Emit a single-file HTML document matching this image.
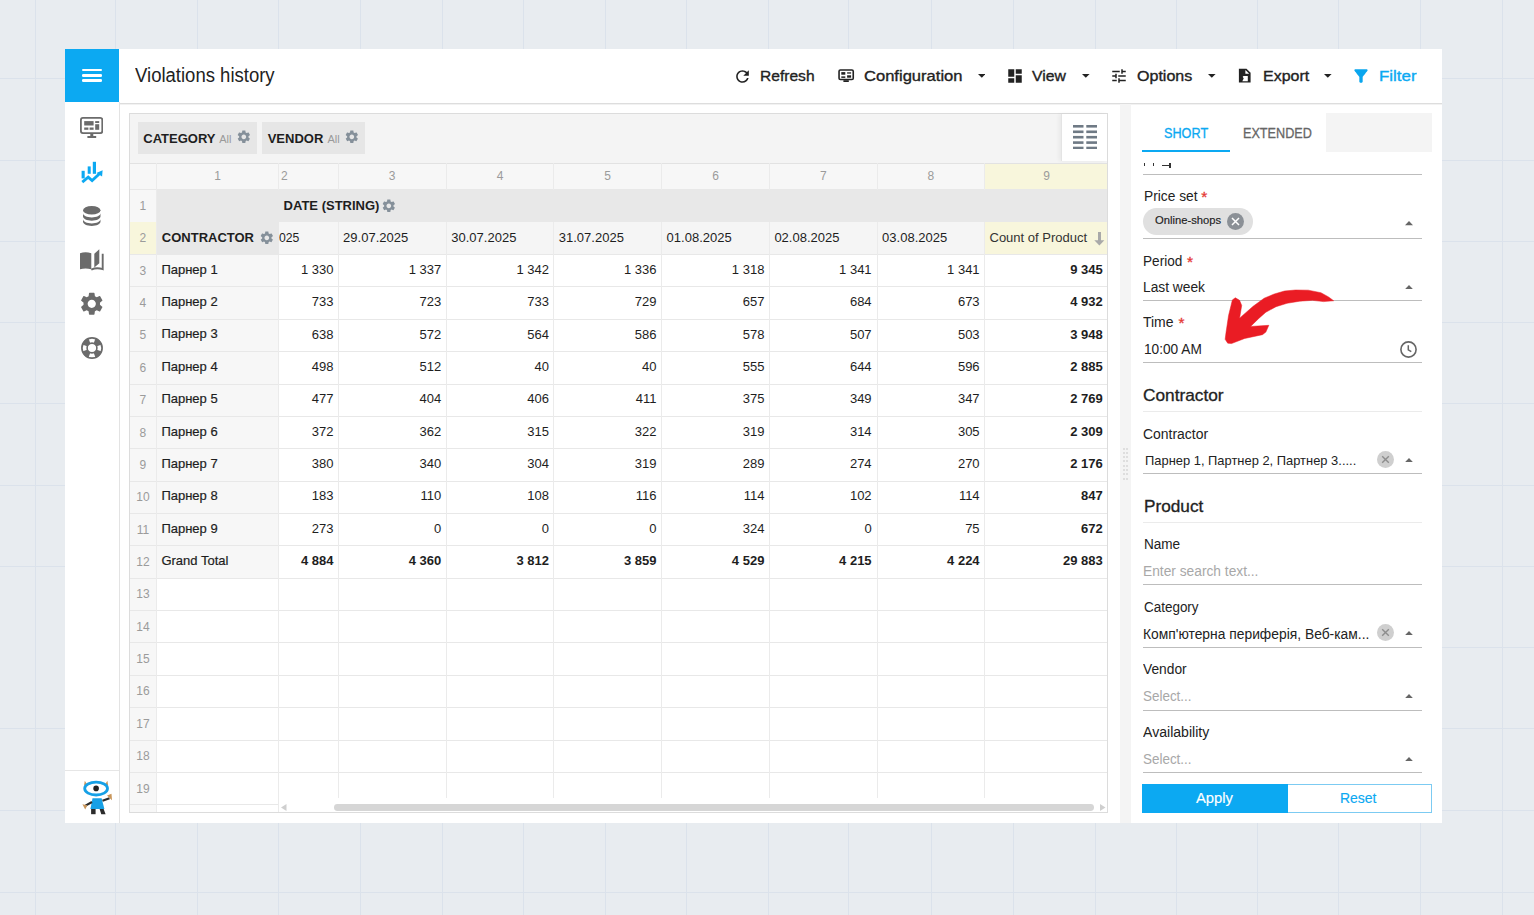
<!DOCTYPE html>
<html><head><meta charset="utf-8"><title>Violations history</title>
<style>
html,body{margin:0;padding:0;}
body{width:1534px;height:915px;position:relative;overflow:hidden;background:#e8ecf0;font-family:"Liberation Sans", sans-serif;}
.r{position:absolute;}
.t{position:absolute;white-space:nowrap;font-family:"Liberation Sans", sans-serif;}
</style></head><body>
<div class="r" style="left:35.00px;top:0.00px;width:1.00px;height:915.00px;background:#dbe2eb;"></div>
<div class="r" style="left:115.00px;top:0.00px;width:1.00px;height:915.00px;background:#dbe2eb;"></div>
<div class="r" style="left:197.00px;top:0.00px;width:1.00px;height:915.00px;background:#dbe2eb;"></div>
<div class="r" style="left:278.00px;top:0.00px;width:1.00px;height:915.00px;background:#dbe2eb;"></div>
<div class="r" style="left:360.00px;top:0.00px;width:1.00px;height:915.00px;background:#dbe2eb;"></div>
<div class="r" style="left:442.00px;top:0.00px;width:1.00px;height:915.00px;background:#dbe2eb;"></div>
<div class="r" style="left:523.00px;top:0.00px;width:1.00px;height:915.00px;background:#dbe2eb;"></div>
<div class="r" style="left:605.00px;top:0.00px;width:1.00px;height:915.00px;background:#dbe2eb;"></div>
<div class="r" style="left:686.00px;top:0.00px;width:1.00px;height:915.00px;background:#dbe2eb;"></div>
<div class="r" style="left:768.00px;top:0.00px;width:1.00px;height:915.00px;background:#dbe2eb;"></div>
<div class="r" style="left:848.00px;top:0.00px;width:1.00px;height:915.00px;background:#dbe2eb;"></div>
<div class="r" style="left:931.00px;top:0.00px;width:1.00px;height:915.00px;background:#dbe2eb;"></div>
<div class="r" style="left:1013.00px;top:0.00px;width:1.00px;height:915.00px;background:#dbe2eb;"></div>
<div class="r" style="left:1095.00px;top:0.00px;width:1.00px;height:915.00px;background:#dbe2eb;"></div>
<div class="r" style="left:1176.00px;top:0.00px;width:1.00px;height:915.00px;background:#dbe2eb;"></div>
<div class="r" style="left:1257.00px;top:0.00px;width:1.00px;height:915.00px;background:#dbe2eb;"></div>
<div class="r" style="left:1338.00px;top:0.00px;width:1.00px;height:915.00px;background:#dbe2eb;"></div>
<div class="r" style="left:1420.00px;top:0.00px;width:1.00px;height:915.00px;background:#dbe2eb;"></div>
<div class="r" style="left:1502.00px;top:0.00px;width:1.00px;height:915.00px;background:#dbe2eb;"></div>
<div class="r" style="left:0.00px;top:78.00px;width:1534.00px;height:1.00px;background:#dbe2eb;"></div>
<div class="r" style="left:0.00px;top:160.00px;width:1534.00px;height:1.00px;background:#dbe2eb;"></div>
<div class="r" style="left:0.00px;top:241.00px;width:1534.00px;height:1.00px;background:#dbe2eb;"></div>
<div class="r" style="left:0.00px;top:322.00px;width:1534.00px;height:1.00px;background:#dbe2eb;"></div>
<div class="r" style="left:0.00px;top:403.00px;width:1534.00px;height:1.00px;background:#dbe2eb;"></div>
<div class="r" style="left:0.00px;top:485.00px;width:1534.00px;height:1.00px;background:#dbe2eb;"></div>
<div class="r" style="left:0.00px;top:566.00px;width:1534.00px;height:1.00px;background:#dbe2eb;"></div>
<div class="r" style="left:0.00px;top:728.00px;width:1534.00px;height:1.00px;background:#dbe2eb;"></div>
<div class="r" style="left:0.00px;top:810.00px;width:1534.00px;height:1.00px;background:#dbe2eb;"></div>
<div class="r" style="left:0.00px;top:892.00px;width:1534.00px;height:1.00px;background:#dbe2eb;"></div>
<div class="r" style="left:1442.00px;top:647.00px;width:92.00px;height:1.00px;background:#dbe2eb;"></div>
<div class="r" style="left:65.00px;top:49.00px;width:1377.00px;height:774.00px;background:#ffffff;"></div>
<div class="r" style="left:65.00px;top:49.00px;width:53.50px;height:53.30px;background:#0ca9f2;"></div>
<div class="r" style="left:81.50px;top:68.70px;width:20.20px;height:2.60px;background:#ffffff;border-radius:1.3px"></div>
<div class="r" style="left:81.50px;top:74.00px;width:20.20px;height:2.60px;background:#ffffff;border-radius:1.3px"></div>
<div class="r" style="left:81.50px;top:79.40px;width:20.20px;height:2.60px;background:#ffffff;border-radius:1.3px"></div>
<div class="r" style="left:118.50px;top:103.00px;width:1323.50px;height:1.00px;background:#dddddd;"></div>
<div class="r" style="left:118.50px;top:104.00px;width:1323.50px;height:1.00px;background:#f2f2f2;"></div>
<div class="r" style="left:118.50px;top:102.00px;width:1.20px;height:721.00px;background:#e3e3e3;"></div>
<div class="r" style="left:65.00px;top:770.00px;width:53.50px;height:1.00px;background:#e6e6e6;"></div>
<div class="t" style="left:135.00px;top:64.67px;font-size:20px;line-height:20px;color:#222;font-weight:normal;transform:scaleX(0.9257);transform-origin:0 0;">Violations history</div>
<div class="t" style="left:760.40px;top:68.03px;font-size:15.2px;line-height:15.2px;color:#222222;font-weight:normal;transform:scaleX(1.0263);transform-origin:0 0;-webkit-text-stroke:0.35px currentColor;">Refresh</div>
<div class="t" style="left:863.60px;top:68.03px;font-size:15.2px;line-height:15.2px;color:#222222;font-weight:normal;transform:scaleX(1.0902);transform-origin:0 0;-webkit-text-stroke:0.35px currentColor;">Configuration</div>
<div class="t" style="left:1032.10px;top:68.03px;font-size:15.2px;line-height:15.2px;color:#222222;font-weight:normal;transform:scaleX(1.0386);transform-origin:0 0;-webkit-text-stroke:0.35px currentColor;">View</div>
<div class="t" style="left:1136.80px;top:68.03px;font-size:15.2px;line-height:15.2px;color:#222222;font-weight:normal;transform:scaleX(1.0564);transform-origin:0 0;-webkit-text-stroke:0.35px currentColor;">Options</div>
<div class="t" style="left:1262.60px;top:68.03px;font-size:15.2px;line-height:15.2px;color:#222222;font-weight:normal;transform:scaleX(1.0517);transform-origin:0 0;-webkit-text-stroke:0.35px currentColor;">Export</div>
<div class="t" style="left:1378.50px;top:68.03px;font-size:15.2px;line-height:15.2px;color:#0ca9f2;font-weight:normal;transform:scaleX(1.1143);transform-origin:0 0;-webkit-text-stroke:0.35px currentColor;">Filter</div>
<svg class="r" style="left:732.80px;top:66.50px;" width="19.00" height="19.00" viewBox="0 0 24 24"><path fill="#222222" d="M17.65 6.35C16.2 4.9 14.21 4 12 4c-4.42 0-7.99 3.58-7.99 8s3.57 8 7.99 8c3.73 0 6.84-2.55 7.73-6h-2.08c-.82 2.33-3.04 4-5.65 4-3.31 0-6-2.69-6-6s2.69-6 6-6c1.66 0 3.14.69 4.22 1.78L13 11h7V4l-2.35 2.35z"/></svg>
<svg class="r" style="left:830.00px;top:62.00px;" width="40.00" height="28.00" viewBox="0 0 40 28"><rect x="9.05" y="7.95" width="14.2" height="9.6" rx="1.3" fill="none" stroke="#222222" stroke-width="1.6"/><rect x="11.3" y="10.1" width="4" height="2.6" fill="#222222"/><rect x="17.1" y="10.1" width="4" height="1.7" fill="#555"/><rect x="11.3" y="14.4" width="4" height="1.5" fill="#222222"/><rect x="17.1" y="13.3" width="4" height="2.4" fill="#222222"/><rect x="13.4" y="18.2" width="5.4" height="1.8" fill="#222222"/></svg>
<svg class="r" style="left:977.70px;top:74.00px;" width="7.60" height="3.80" viewBox="0 0 7.6 3.8"><path fill="#222222" d="M0 0H7.6L3.8 3.8z"/></svg>
<svg class="r" style="left:1082.10px;top:74.00px;" width="7.60" height="3.80" viewBox="0 0 7.6 3.8"><path fill="#222222" d="M0 0H7.6L3.8 3.8z"/></svg>
<svg class="r" style="left:1208.00px;top:74.00px;" width="7.60" height="3.80" viewBox="0 0 7.6 3.8"><path fill="#222222" d="M0 0H7.6L3.8 3.8z"/></svg>
<svg class="r" style="left:1324.00px;top:74.00px;" width="7.60" height="3.80" viewBox="0 0 7.6 3.8"><path fill="#222222" d="M0 0H7.6L3.8 3.8z"/></svg>
<svg class="r" style="left:1005.90px;top:67.20px;" width="18.00" height="18.00" viewBox="0 0 24 24"><path fill="#222222" d="M3 13h8V3H3v10zm0 8h8v-6H3v6zm10 0h8V11h-8v10zm0-18v6h8V3h-8z" transform="translate(12 12) scale(1.0 1.0) translate(-12 -12)"/></svg>
<svg class="r" style="left:1110.05px;top:66.95px;" width="18.00" height="18.00" viewBox="0 0 24 24"><path fill="#222222" d="M3 17v2h6v-2H3zM3 5v2h10V5H3zm10 16v-2h8v-2h-8v-2h-2v6h2zM7 9v2H3v2h4v2h2V9H7zm14 4v-2H11v2h10zm-6-4h2V7h4V5h-4V3h-2v6z"/></svg>
<svg class="r" style="left:1234.00px;top:64.00px;" width="22.00" height="22.00" viewBox="0 0 22 22"><path fill="#222222" d="M4.9 4.7H12.5L16.6 8.7V18.6H4.9z"/><path fill="#fff" d="M11.4 6.1V9.7H15.2z"/><path fill="#fff" d="M9.5 11.9H13.8V17.2H8.3L9.7 14.6 8.7 12.7z"/></svg>
<svg class="r" style="left:1351.30px;top:65.70px;" width="20.00" height="20.00" viewBox="0 0 24 24"><path fill="#0aa6ee" d="M4.25 5.61C6.27 8.2 10 13 10 13v6c0 .55.45 1 1 1h2c.55 0 1-.45 1-1v-6s3.72-4.8 5.74-7.39c.51-.66.04-1.61-.79-1.61H5.04c-.83 0-1.3.95-.79 1.61z"/></svg>
<svg class="r" style="left:79.80px;top:116.60px;" width="23.20" height="21.00" viewBox="0 0 23.2 21"><rect x="0.9" y="0.9" width="21.4" height="15.2" rx="2" fill="none" stroke="#6b6b6b" stroke-width="1.8"/><rect x="4.2" y="4.1" width="9.4" height="4.4" fill="#6b6b6b"/><rect x="4.2" y="10.5" width="4.2" height="2.3" fill="#6b6b6b"/><rect x="9.6" y="10.5" width="4" height="2.3" fill="#6b6b6b"/><rect x="15.2" y="4.1" width="4" height="1.9" fill="#6b6b6b"/><rect x="15.2" y="7.2" width="4" height="5.6" fill="#6b6b6b"/><rect x="10.3" y="16.9" width="3" height="2.4" fill="#6b6b6b"/><rect x="7.4" y="19" width="8.8" height="2" fill="#6b6b6b"/></svg>
<svg class="r" style="left:80.00px;top:160.00px;" width="24.00" height="25.00" viewBox="0 0 24 25"><rect x="1.6" y="10.8" width="3.1" height="7.6" fill="#0ca9f2"/><rect x="7.7" y="6.4" width="3" height="7.4" fill="#0ca9f2"/><rect x="12.8" y="1.8" width="3.2" height="12" fill="#0ca9f2"/><polyline points="2.3,22.1 8.2,17.2 12.1,20.6 20,13.2" fill="none" stroke="#0ca9f2" stroke-width="2.8"/><path fill="#0ca9f2" d="M22.6 10.3L22.1 16.6 16.4 12.9z"/></svg>
<svg class="r" style="left:81.80px;top:204.80px;" width="19.50" height="21.20" viewBox="0 0 19.5 21.2"><path fill="#6b6b6b" d="M1 14.2v2.6c0 2.3 3.9 4.2 8.75 4.2s8.75-1.9 8.75-4.2v-2.6c0 2.3-3.9 4.2-8.75 4.2S1 16.5 1 14.2z"/><path fill="#6b6b6b" d="M1 8.3v3.2c0 2.3 3.9 4.2 8.75 4.2s8.75-1.9 8.75-4.2V8.3c0 2.3-3.9 4.2-8.75 4.2S1 10.6 1 8.3z"/><ellipse cx="9.75" cy="5.2" rx="8.75" ry="4.3" fill="#6b6b6b"/></svg>
<svg class="r" style="left:79.80px;top:249.30px;" width="23.80" height="21.60" viewBox="0 0 23.8 21.6"><path fill="#6b6b6b" d="M0 4.2C3.5 3 7.5 3 11.3 4.2V20.3C7.5 19.1 3.5 19.1 0 20.3z"/><path fill="#6b6b6b" d="M14.3 4.8L19.3 0.3V14.2L14.3 18.4z"/><path fill="none" stroke="#6b6b6b" stroke-width="1.9" d="M22.7 4.8V20.2C19 19 15 19 11.3 20.6"/></svg>
<svg class="r" style="left:77.55px;top:289.95px;" width="27.50" height="27.50" viewBox="0 0 24 24"><path fill="#6b6b6b" d="M19.14,12.94c0.04-0.3,0.06-0.61,0.06-0.94c0-0.32-0.02-0.64-0.07-0.94l2.03-1.58c0.18-0.14,0.23-0.41,0.12-0.61l-1.92-3.32c-0.12-0.22-0.37-0.29-0.59-0.22l-2.39,0.96c-0.5-0.38-1.03-0.7-1.62-0.94L14.4,2.81c-0.04-0.24-0.24-0.41-0.48-0.41h-3.84c-0.24,0-0.43,0.17-0.47,0.41L9.25,5.35C8.66,5.59,8.12,5.92,7.63,6.29L5.24,5.33c-0.22-0.08-0.47,0-0.59,0.22L2.74,8.87C2.62,9.08,2.66,9.34,2.86,9.48l2.03,1.58C4.84,11.36,4.8,11.69,4.8,12s0.02,0.64,0.07,0.94l-2.03,1.58c-0.18,0.14-0.23,0.41-0.12,0.61l1.92,3.32c0.12,0.22,0.37,0.29,0.59,0.22l2.39-0.96c0.5,0.38,1.03,0.7,1.62,0.94l0.36,2.54c0.05,0.24,0.24,0.41,0.48,0.41h3.84c0.24,0,0.44-0.17,0.47-0.41l0.36-2.54c0.59-0.24,1.13-0.56,1.62-0.94l2.39,0.96c0.22,0.08,0.47,0,0.59-0.22l1.92-3.32c0.12-0.22,0.07-0.47-0.12-0.61L19.14,12.94z M12,15.6c-1.98,0-3.6-1.62-3.6-3.6s1.62-3.6,3.6-3.6s3.6,1.62,3.6,3.6S13.98,15.6,12,15.6z"/></svg>
<svg class="r" style="left:80.50px;top:337.30px;" width="22.00" height="22.00" viewBox="0 0 22 22"><circle cx="11" cy="11" r="10.1" fill="none" stroke="#6b6b6b" stroke-width="1.7"/><circle cx="11" cy="11" r="4.9" fill="none" stroke="#6b6b6b" stroke-width="1.6"/><path fill="#6b6b6b" d="M20.68 14.52A10.3 10.3 0 0 1 14.52 20.68L12.54 15.23A4.5 4.5 0 0 0 15.23 12.54zM7.48 20.68A10.3 10.3 0 0 1 1.32 14.52L6.77 12.54A4.5 4.5 0 0 0 9.46 15.23zM1.32 7.48A10.3 10.3 0 0 1 7.48 1.32L9.46 6.77A4.5 4.5 0 0 0 6.77 9.46zM14.52 1.32A10.3 10.3 0 0 1 20.68 7.48L15.23 9.46A4.5 4.5 0 0 0 12.54 6.77z"/></svg>
<svg class="r" style="left:78.00px;top:775.00px;" width="38.00" height="42.00" viewBox="0 0 38 42"><path d="M6.00,10.50 L6.80,5.80 L9.00,9.30z M27.20,9.30 L29.40,5.80 L30.20,10.50z" fill="#c8955a"/><ellipse cx="18.099999999999994" cy="13.600000000000023" rx="11.4" ry="6.4" fill="none" stroke="#16a0e6" stroke-width="2.8"/><circle cx="18.099999999999994" cy="13.399999999999977" r="2.8" fill="#222"/><path d="M14.50,23.20 L23.60,23.20 L26.40,34.00 L12.40,34.00z" fill="#16a0e6"/><path d="M14.00,27.00 L7.50,30.60 M24.50,25.80 L31.50,23.20" stroke="#2b2b2b" stroke-width="2.2"/><path d="M4.40,29.20 L9.40,30.20 L7.20,34.60z M29.00,20.50 L33.50,18.80 L34.00,25.20z" fill="#c8955a"/><path d="M13.10,34.00 H17.60 V39.20 H13.10z" fill="#2b2b2b"/><path d="M21.60,34.00 L25.60,34.00 L27.60,39.20 L23.30,39.20z" fill="#2b2b2b"/></svg>
<div class="r" style="left:129.40px;top:113.20px;width:978.60px;height:699.80px;background:#ffffff;box-sizing:border-box;border:1px solid #dcdcdc"></div>
<div class="r" style="left:130.40px;top:114.20px;width:976.60px;height:49.00px;background:#f4f4f4;"></div>
<div class="r" style="left:138.20px;top:122.00px;width:118.50px;height:31.80px;background:#e6e6e6;"></div>
<div class="r" style="left:262.20px;top:122.00px;width:102.40px;height:31.80px;background:#e6e6e6;"></div>
<div class="t" style="left:143.30px;top:131.80px;font-size:13px;line-height:13px;color:#1e1e1e;font-weight:bold;">CATEGORY</div>
<div class="t" style="left:219.20px;top:133.89px;font-size:11px;line-height:11px;color:#9a9a9a;font-weight:normal;">All</div>
<svg class="r" style="left:235.89px;top:129.49px;" width="15.63" height="15.63" viewBox="0 0 24 24"><path fill="#85909a" d="M19.14,12.94c0.04-0.3,0.06-0.61,0.06-0.94c0-0.32-0.02-0.64-0.07-0.94l2.03-1.58c0.18-0.14,0.23-0.41,0.12-0.61l-1.92-3.32c-0.12-0.22-0.37-0.29-0.59-0.22l-2.39,0.96c-0.5-0.38-1.03-0.7-1.62-0.94L14.4,2.81c-0.04-0.24-0.24-0.41-0.48-0.41h-3.84c-0.24,0-0.43,0.17-0.47,0.41L9.25,5.35C8.66,5.59,8.12,5.92,7.63,6.29L5.24,5.33c-0.22-0.08-0.47,0-0.59,0.22L2.74,8.87C2.62,9.08,2.66,9.34,2.86,9.48l2.03,1.58C4.84,11.36,4.8,11.69,4.8,12s0.02,0.64,0.07,0.94l-2.03,1.58c-0.18,0.14-0.23,0.41-0.12,0.61l1.92,3.32c0.12,0.22,0.37,0.29,0.59,0.22l2.39-0.96c0.5,0.38,1.03,0.7,1.62,0.94l0.36,2.54c0.05,0.24,0.24,0.41,0.48,0.41h3.84c0.24,0,0.44-0.17,0.47-0.41l0.36-2.54c0.59-0.24,1.13-0.56,1.62-0.94l2.39,0.96c0.22,0.08,0.47,0,0.59-0.22l1.92-3.32c0.12-0.22,0.07-0.47-0.12-0.61L19.14,12.94z M12,15.6c-1.98,0-3.6-1.62-3.6-3.6s1.62-3.6,3.6-3.6s3.6,1.62,3.6,3.6S13.98,15.6,12,15.6z"/></svg>
<div class="t" style="left:267.70px;top:131.80px;font-size:13px;line-height:13px;color:#1e1e1e;font-weight:bold;">VENDOR</div>
<div class="t" style="left:327.40px;top:133.89px;font-size:11px;line-height:11px;color:#9a9a9a;font-weight:normal;">All</div>
<svg class="r" style="left:343.99px;top:129.49px;" width="15.63" height="15.63" viewBox="0 0 24 24"><path fill="#85909a" d="M19.14,12.94c0.04-0.3,0.06-0.61,0.06-0.94c0-0.32-0.02-0.64-0.07-0.94l2.03-1.58c0.18-0.14,0.23-0.41,0.12-0.61l-1.92-3.32c-0.12-0.22-0.37-0.29-0.59-0.22l-2.39,0.96c-0.5-0.38-1.03-0.7-1.62-0.94L14.4,2.81c-0.04-0.24-0.24-0.41-0.48-0.41h-3.84c-0.24,0-0.43,0.17-0.47,0.41L9.25,5.35C8.66,5.59,8.12,5.92,7.63,6.29L5.24,5.33c-0.22-0.08-0.47,0-0.59,0.22L2.74,8.87C2.62,9.08,2.66,9.34,2.86,9.48l2.03,1.58C4.84,11.36,4.8,11.69,4.8,12s0.02,0.64,0.07,0.94l-2.03,1.58c-0.18,0.14-0.23,0.41-0.12,0.61l1.92,3.32c0.12,0.22,0.37,0.29,0.59,0.22l2.39-0.96c0.5,0.38,1.03,0.7,1.62,0.94l0.36,2.54c0.05,0.24,0.24,0.41,0.48,0.41h3.84c0.24,0,0.44-0.17,0.47-0.41l0.36-2.54c0.59-0.24,1.13-0.56,1.62-0.94l2.39,0.96c0.22,0.08,0.47,0,0.59-0.22l1.92-3.32c0.12-0.22,0.07-0.47-0.12-0.61L19.14,12.94z M12,15.6c-1.98,0-3.6-1.62-3.6-3.6s1.62-3.6,3.6-3.6s3.6,1.62,3.6,3.6S13.98,15.6,12,15.6z"/></svg>
<div class="r" style="left:1060.80px;top:113.60px;width:46.20px;height:47.00px;background:#ffffff;box-shadow:-2px 0 4px rgba(0,0,0,0.05);border-left:1px solid #e4e4e4;box-sizing:border-box"></div>
<svg class="r" style="left:1072.60px;top:124.70px;" width="24.10" height="24.40" viewBox="0 0 24.1 24.4"><g fill="#6f7a85"><rect x="0" y="0.00" width="10.5" height="2.6"/><rect x="13.3" y="0.00" width="10.8" height="2.6"/><rect x="0" y="5.50" width="10.5" height="2.6"/><rect x="13.3" y="5.50" width="10.8" height="2.6"/><rect x="0" y="10.90" width="10.5" height="2.6"/><rect x="13.3" y="10.90" width="10.8" height="2.6"/><rect x="0" y="16.30" width="10.5" height="2.6"/><rect x="13.3" y="16.30" width="10.8" height="2.6"/><rect x="0" y="21.70" width="10.5" height="2.6"/><rect x="13.3" y="21.70" width="10.8" height="2.6"/></g></svg>
<div class="r" style="left:130.40px;top:163.20px;width:976.60px;height:26.70px;background:#f7f7f7;"></div>
<div class="r" style="left:984.80px;top:163.20px;width:122.20px;height:26.70px;background:#f8f6dc;"></div>
<div class="r" style="left:130.40px;top:189.90px;width:26.00px;height:622.10px;background:#f7f7f7;"></div>
<div class="r" style="left:130.40px;top:222.26px;width:26.00px;height:32.36px;background:#f8f6dc;"></div>
<div class="r" style="left:156.40px;top:189.90px;width:950.60px;height:32.36px;background:#e8e8e8;"></div>
<div class="r" style="left:156.40px;top:222.26px;width:122.20px;height:32.36px;background:#e8e8e8;"></div>
<div class="r" style="left:278.60px;top:222.26px;width:706.20px;height:32.36px;background:#f5f5f5;"></div>
<div class="r" style="left:984.80px;top:222.26px;width:122.20px;height:32.36px;background:#f8f6dc;"></div>
<div class="r" style="left:156.40px;top:254.62px;width:122.20px;height:323.60px;background:#f7f7f7;"></div>
<div class="r" style="left:130.40px;top:163.20px;width:976.60px;height:1.00px;background:#e2e2e2;"></div>
<div class="r" style="left:130.40px;top:189.40px;width:976.60px;height:1.00px;background:#e8e8e8;"></div>
<div class="r" style="left:130.40px;top:254.12px;width:976.60px;height:1.00px;background:#e8e8e8;"></div>
<div class="r" style="left:130.40px;top:286.48px;width:976.60px;height:1.00px;background:#e8e8e8;"></div>
<div class="r" style="left:130.40px;top:318.84px;width:976.60px;height:1.00px;background:#e8e8e8;"></div>
<div class="r" style="left:130.40px;top:351.20px;width:976.60px;height:1.00px;background:#e8e8e8;"></div>
<div class="r" style="left:130.40px;top:383.56px;width:976.60px;height:1.00px;background:#e8e8e8;"></div>
<div class="r" style="left:130.40px;top:415.92px;width:976.60px;height:1.00px;background:#e8e8e8;"></div>
<div class="r" style="left:130.40px;top:448.28px;width:976.60px;height:1.00px;background:#e8e8e8;"></div>
<div class="r" style="left:130.40px;top:480.64px;width:976.60px;height:1.00px;background:#e8e8e8;"></div>
<div class="r" style="left:130.40px;top:513.00px;width:976.60px;height:1.00px;background:#e8e8e8;"></div>
<div class="r" style="left:130.40px;top:545.36px;width:976.60px;height:1.00px;background:#e8e8e8;"></div>
<div class="r" style="left:130.40px;top:577.72px;width:976.60px;height:1.00px;background:#e8e8e8;"></div>
<div class="r" style="left:130.40px;top:610.08px;width:976.60px;height:1.00px;background:#e8e8e8;"></div>
<div class="r" style="left:130.40px;top:642.44px;width:976.60px;height:1.00px;background:#e8e8e8;"></div>
<div class="r" style="left:130.40px;top:674.80px;width:976.60px;height:1.00px;background:#e8e8e8;"></div>
<div class="r" style="left:130.40px;top:707.16px;width:976.60px;height:1.00px;background:#e8e8e8;"></div>
<div class="r" style="left:130.40px;top:739.52px;width:976.60px;height:1.00px;background:#e8e8e8;"></div>
<div class="r" style="left:130.40px;top:771.88px;width:976.60px;height:1.00px;background:#e8e8e8;"></div>
<div class="r" style="left:130.40px;top:804.24px;width:148.20px;height:1.00px;background:#e8e8e8;"></div>
<div class="r" style="left:155.90px;top:163.20px;width:1.00px;height:648.80px;background:#ebebeb;"></div>
<div class="r" style="left:278.10px;top:163.20px;width:1.00px;height:26.70px;background:#ebebeb;"></div>
<div class="r" style="left:278.10px;top:254.62px;width:1.00px;height:557.38px;background:#ebebeb;"></div>
<div class="r" style="left:337.60px;top:163.20px;width:1.00px;height:26.70px;background:#ebebeb;"></div>
<div class="r" style="left:337.60px;top:222.26px;width:1.00px;height:575.34px;background:#ebebeb;"></div>
<div class="r" style="left:445.80px;top:163.20px;width:1.00px;height:26.70px;background:#ebebeb;"></div>
<div class="r" style="left:445.80px;top:222.26px;width:1.00px;height:575.34px;background:#ebebeb;"></div>
<div class="r" style="left:553.30px;top:163.20px;width:1.00px;height:26.70px;background:#ebebeb;"></div>
<div class="r" style="left:553.30px;top:222.26px;width:1.00px;height:575.34px;background:#ebebeb;"></div>
<div class="r" style="left:661.10px;top:163.20px;width:1.00px;height:26.70px;background:#ebebeb;"></div>
<div class="r" style="left:661.10px;top:222.26px;width:1.00px;height:575.34px;background:#ebebeb;"></div>
<div class="r" style="left:768.90px;top:163.20px;width:1.00px;height:26.70px;background:#ebebeb;"></div>
<div class="r" style="left:768.90px;top:222.26px;width:1.00px;height:575.34px;background:#ebebeb;"></div>
<div class="r" style="left:876.60px;top:163.20px;width:1.00px;height:26.70px;background:#ebebeb;"></div>
<div class="r" style="left:876.60px;top:222.26px;width:1.00px;height:575.34px;background:#ebebeb;"></div>
<div class="r" style="left:984.30px;top:163.20px;width:1.00px;height:26.70px;background:#ebebeb;"></div>
<div class="r" style="left:984.30px;top:222.26px;width:1.00px;height:575.34px;background:#ebebeb;"></div>
<div class="r" style="left:333.90px;top:803.90px;width:760.10px;height:6.80px;background:#d6d6d6;border-radius:3.4px"></div>
<svg class="r" style="left:281.00px;top:803.50px;" width="6.00" height="7.00" viewBox="0 0 6 7"><path d="M5.5 0V7L0 3.5z" fill="#cfcfcf"/></svg>
<svg class="r" style="left:1099.50px;top:803.50px;" width="6.00" height="7.00" viewBox="0 0 6 7"><path d="M0 0V7L5.5 3.5z" fill="#cfcfcf"/></svg>
<div class="t" style="left:187.50px;width:60px;top:169.64px;font-size:12px;line-height:12px;color:#9b9b9b;font-weight:normal;text-align:center;">1</div>
<div class="t" style="left:254.38px;width:60px;top:169.64px;font-size:12px;line-height:12px;color:#9b9b9b;font-weight:normal;text-align:center;">2</div>
<div class="t" style="left:362.20px;width:60px;top:169.64px;font-size:12px;line-height:12px;color:#9b9b9b;font-weight:normal;text-align:center;">3</div>
<div class="t" style="left:470.05px;width:60px;top:169.64px;font-size:12px;line-height:12px;color:#9b9b9b;font-weight:normal;text-align:center;">4</div>
<div class="t" style="left:577.70px;width:60px;top:169.64px;font-size:12px;line-height:12px;color:#9b9b9b;font-weight:normal;text-align:center;">5</div>
<div class="t" style="left:685.50px;width:60px;top:169.64px;font-size:12px;line-height:12px;color:#9b9b9b;font-weight:normal;text-align:center;">6</div>
<div class="t" style="left:793.25px;width:60px;top:169.64px;font-size:12px;line-height:12px;color:#9b9b9b;font-weight:normal;text-align:center;">7</div>
<div class="t" style="left:900.95px;width:60px;top:169.64px;font-size:12px;line-height:12px;color:#9b9b9b;font-weight:normal;text-align:center;">8</div>
<div class="t" style="left:1016.65px;width:60px;top:169.64px;font-size:12px;line-height:12px;color:#9b9b9b;font-weight:normal;text-align:center;">9</div>
<div class="t" style="left:129.90px;width:26px;top:200.04px;font-size:12px;line-height:12px;color:#9b9b9b;font-weight:normal;text-align:center;">1</div>
<div class="t" style="left:129.90px;width:26px;top:232.40px;font-size:12px;line-height:12px;color:#9b9b9b;font-weight:normal;text-align:center;">2</div>
<div class="t" style="left:129.90px;width:26px;top:264.76px;font-size:12px;line-height:12px;color:#9b9b9b;font-weight:normal;text-align:center;">3</div>
<div class="t" style="left:129.90px;width:26px;top:297.12px;font-size:12px;line-height:12px;color:#9b9b9b;font-weight:normal;text-align:center;">4</div>
<div class="t" style="left:129.90px;width:26px;top:329.48px;font-size:12px;line-height:12px;color:#9b9b9b;font-weight:normal;text-align:center;">5</div>
<div class="t" style="left:129.90px;width:26px;top:361.84px;font-size:12px;line-height:12px;color:#9b9b9b;font-weight:normal;text-align:center;">6</div>
<div class="t" style="left:129.90px;width:26px;top:394.20px;font-size:12px;line-height:12px;color:#9b9b9b;font-weight:normal;text-align:center;">7</div>
<div class="t" style="left:129.90px;width:26px;top:426.56px;font-size:12px;line-height:12px;color:#9b9b9b;font-weight:normal;text-align:center;">8</div>
<div class="t" style="left:129.90px;width:26px;top:458.92px;font-size:12px;line-height:12px;color:#9b9b9b;font-weight:normal;text-align:center;">9</div>
<div class="t" style="left:129.90px;width:26px;top:491.28px;font-size:12px;line-height:12px;color:#9b9b9b;font-weight:normal;text-align:center;">10</div>
<div class="t" style="left:129.90px;width:26px;top:523.64px;font-size:12px;line-height:12px;color:#9b9b9b;font-weight:normal;text-align:center;">11</div>
<div class="t" style="left:129.90px;width:26px;top:556.00px;font-size:12px;line-height:12px;color:#9b9b9b;font-weight:normal;text-align:center;">12</div>
<div class="t" style="left:129.90px;width:26px;top:588.36px;font-size:12px;line-height:12px;color:#9b9b9b;font-weight:normal;text-align:center;">13</div>
<div class="t" style="left:129.90px;width:26px;top:620.72px;font-size:12px;line-height:12px;color:#9b9b9b;font-weight:normal;text-align:center;">14</div>
<div class="t" style="left:129.90px;width:26px;top:653.08px;font-size:12px;line-height:12px;color:#9b9b9b;font-weight:normal;text-align:center;">15</div>
<div class="t" style="left:129.90px;width:26px;top:685.44px;font-size:12px;line-height:12px;color:#9b9b9b;font-weight:normal;text-align:center;">16</div>
<div class="t" style="left:129.90px;width:26px;top:717.80px;font-size:12px;line-height:12px;color:#9b9b9b;font-weight:normal;text-align:center;">17</div>
<div class="t" style="left:129.90px;width:26px;top:750.16px;font-size:12px;line-height:12px;color:#9b9b9b;font-weight:normal;text-align:center;">18</div>
<div class="t" style="left:129.90px;width:26px;top:782.52px;font-size:12px;line-height:12px;color:#9b9b9b;font-weight:normal;text-align:center;">19</div>
<div class="t" style="left:283.60px;top:198.90px;font-size:13px;line-height:13px;color:#1e1e1e;font-weight:bold;">DATE (STRING)</div>
<svg class="r" style="left:380.89px;top:197.59px;" width="15.63" height="15.63" viewBox="0 0 24 24"><path fill="#85909a" d="M19.14,12.94c0.04-0.3,0.06-0.61,0.06-0.94c0-0.32-0.02-0.64-0.07-0.94l2.03-1.58c0.18-0.14,0.23-0.41,0.12-0.61l-1.92-3.32c-0.12-0.22-0.37-0.29-0.59-0.22l-2.39,0.96c-0.5-0.38-1.03-0.7-1.62-0.94L14.4,2.81c-0.04-0.24-0.24-0.41-0.48-0.41h-3.84c-0.24,0-0.43,0.17-0.47,0.41L9.25,5.35C8.66,5.59,8.12,5.92,7.63,6.29L5.24,5.33c-0.22-0.08-0.47,0-0.59,0.22L2.74,8.87C2.62,9.08,2.66,9.34,2.86,9.48l2.03,1.58C4.84,11.36,4.8,11.69,4.8,12s0.02,0.64,0.07,0.94l-2.03,1.58c-0.18,0.14-0.23,0.41-0.12,0.61l1.92,3.32c0.12,0.22,0.37,0.29,0.59,0.22l2.39-0.96c0.5,0.38,1.03,0.7,1.62,0.94l0.36,2.54c0.05,0.24,0.24,0.41,0.48,0.41h3.84c0.24,0,0.44-0.17,0.47-0.41l0.36-2.54c0.59-0.24,1.13-0.56,1.62-0.94l2.39,0.96c0.22,0.08,0.47,0,0.59-0.22l1.92-3.32c0.12-0.22,0.07-0.47-0.12-0.61L19.14,12.94z M12,15.6c-1.98,0-3.6-1.62-3.6-3.6s1.62-3.6,3.6-3.6s3.6,1.62,3.6,3.6S13.98,15.6,12,15.6z"/></svg>
<div class="t" style="left:161.80px;top:231.10px;font-size:13px;line-height:13px;color:#1e1e1e;font-weight:bold;">CONTRACTOR</div>
<svg class="r" style="left:258.89px;top:229.79px;" width="15.63" height="15.63" viewBox="0 0 24 24"><path fill="#85909a" d="M19.14,12.94c0.04-0.3,0.06-0.61,0.06-0.94c0-0.32-0.02-0.64-0.07-0.94l2.03-1.58c0.18-0.14,0.23-0.41,0.12-0.61l-1.92-3.32c-0.12-0.22-0.37-0.29-0.59-0.22l-2.39,0.96c-0.5-0.38-1.03-0.7-1.62-0.94L14.4,2.81c-0.04-0.24-0.24-0.41-0.48-0.41h-3.84c-0.24,0-0.43,0.17-0.47,0.41L9.25,5.35C8.66,5.59,8.12,5.92,7.63,6.29L5.24,5.33c-0.22-0.08-0.47,0-0.59,0.22L2.74,8.87C2.62,9.08,2.66,9.34,2.86,9.48l2.03,1.58C4.84,11.36,4.8,11.69,4.8,12s0.02,0.64,0.07,0.94l-2.03,1.58c-0.18,0.14-0.23,0.41-0.12,0.61l1.92,3.32c0.12,0.22,0.37,0.29,0.59,0.22l2.39-0.96c0.5,0.38,1.03,0.7,1.62,0.94l0.36,2.54c0.05,0.24,0.24,0.41,0.48,0.41h3.84c0.24,0,0.44-0.17,0.47-0.41l0.36-2.54c0.59-0.24,1.13-0.56,1.62-0.94l2.39,0.96c0.22,0.08,0.47,0,0.59-0.22l1.92-3.32c0.12-0.22,0.07-0.47-0.12-0.61L19.14,12.94z M12,15.6c-1.98,0-3.6-1.62-3.6-3.6s1.62-3.6,3.6-3.6s3.6,1.62,3.6,3.6S13.98,15.6,12,15.6z"/></svg>
<div class="t" style="left:278.90px;top:230.90px;font-size:13px;line-height:13px;color:#1e1e1e;font-weight:normal;transform:scaleX(0.9397);transform-origin:0 0;">025</div>
<div class="t" style="left:343.10px;top:230.90px;font-size:13px;line-height:13px;color:#1e1e1e;font-weight:normal;">29.07.2025</div>
<div class="t" style="left:451.30px;top:230.90px;font-size:13px;line-height:13px;color:#1e1e1e;font-weight:normal;">30.07.2025</div>
<div class="t" style="left:558.80px;top:230.90px;font-size:13px;line-height:13px;color:#1e1e1e;font-weight:normal;">31.07.2025</div>
<div class="t" style="left:666.60px;top:230.90px;font-size:13px;line-height:13px;color:#1e1e1e;font-weight:normal;">01.08.2025</div>
<div class="t" style="left:774.40px;top:230.90px;font-size:13px;line-height:13px;color:#1e1e1e;font-weight:normal;">02.08.2025</div>
<div class="t" style="left:882.10px;top:230.90px;font-size:13px;line-height:13px;color:#1e1e1e;font-weight:normal;">03.08.2025</div>
<div class="t" style="left:989.50px;top:230.90px;font-size:13px;line-height:13px;color:#333333;font-weight:normal;">Count of Product</div>
<div class="r" style="left:1098.20px;top:232.30px;width:2.40px;height:8.70px;background:#a9a9a9;"></div>
<svg class="r" style="left:1094.00px;top:240.00px;" width="11.00" height="6.00" viewBox="0 0 11 6"><path d="M0.3 0.3H10.3L5.4 5.4z" fill="#a9a9a9"/></svg>
<div class="t" style="left:161.40px;top:262.72px;font-size:13px;line-height:13px;color:#1e1e1e;font-weight:normal;-webkit-text-stroke:0.2px currentColor;">Парнер 1</div>
<div class="t" style="right:1200.50px;top:262.92px;font-size:13px;line-height:13px;color:#1e1e1e;font-weight:normal;text-align:right;">1&nbsp;330</div>
<div class="t" style="right:1092.80px;top:262.92px;font-size:13px;line-height:13px;color:#1e1e1e;font-weight:normal;text-align:right;">1&nbsp;337</div>
<div class="t" style="right:985.00px;top:262.92px;font-size:13px;line-height:13px;color:#1e1e1e;font-weight:normal;text-align:right;">1&nbsp;342</div>
<div class="t" style="right:877.50px;top:262.92px;font-size:13px;line-height:13px;color:#1e1e1e;font-weight:normal;text-align:right;">1&nbsp;336</div>
<div class="t" style="right:769.60px;top:262.92px;font-size:13px;line-height:13px;color:#1e1e1e;font-weight:normal;text-align:right;">1&nbsp;318</div>
<div class="t" style="right:662.40px;top:262.92px;font-size:13px;line-height:13px;color:#1e1e1e;font-weight:normal;text-align:right;">1&nbsp;341</div>
<div class="t" style="right:554.40px;top:262.92px;font-size:13px;line-height:13px;color:#1e1e1e;font-weight:normal;text-align:right;">1&nbsp;341</div>
<div class="t" style="right:431.20px;top:262.92px;font-size:13px;line-height:13px;color:#1e1e1e;font-weight:bold;text-align:right;">9&nbsp;345</div>
<div class="t" style="left:161.40px;top:295.08px;font-size:13px;line-height:13px;color:#1e1e1e;font-weight:normal;-webkit-text-stroke:0.2px currentColor;">Парнер 2</div>
<div class="t" style="right:1200.50px;top:295.28px;font-size:13px;line-height:13px;color:#1e1e1e;font-weight:normal;text-align:right;">733</div>
<div class="t" style="right:1092.80px;top:295.28px;font-size:13px;line-height:13px;color:#1e1e1e;font-weight:normal;text-align:right;">723</div>
<div class="t" style="right:985.00px;top:295.28px;font-size:13px;line-height:13px;color:#1e1e1e;font-weight:normal;text-align:right;">733</div>
<div class="t" style="right:877.50px;top:295.28px;font-size:13px;line-height:13px;color:#1e1e1e;font-weight:normal;text-align:right;">729</div>
<div class="t" style="right:769.60px;top:295.28px;font-size:13px;line-height:13px;color:#1e1e1e;font-weight:normal;text-align:right;">657</div>
<div class="t" style="right:662.40px;top:295.28px;font-size:13px;line-height:13px;color:#1e1e1e;font-weight:normal;text-align:right;">684</div>
<div class="t" style="right:554.40px;top:295.28px;font-size:13px;line-height:13px;color:#1e1e1e;font-weight:normal;text-align:right;">673</div>
<div class="t" style="right:431.20px;top:295.28px;font-size:13px;line-height:13px;color:#1e1e1e;font-weight:bold;text-align:right;">4&nbsp;932</div>
<div class="t" style="left:161.40px;top:327.44px;font-size:13px;line-height:13px;color:#1e1e1e;font-weight:normal;-webkit-text-stroke:0.2px currentColor;">Парнер 3</div>
<div class="t" style="right:1200.50px;top:327.64px;font-size:13px;line-height:13px;color:#1e1e1e;font-weight:normal;text-align:right;">638</div>
<div class="t" style="right:1092.80px;top:327.64px;font-size:13px;line-height:13px;color:#1e1e1e;font-weight:normal;text-align:right;">572</div>
<div class="t" style="right:985.00px;top:327.64px;font-size:13px;line-height:13px;color:#1e1e1e;font-weight:normal;text-align:right;">564</div>
<div class="t" style="right:877.50px;top:327.64px;font-size:13px;line-height:13px;color:#1e1e1e;font-weight:normal;text-align:right;">586</div>
<div class="t" style="right:769.60px;top:327.64px;font-size:13px;line-height:13px;color:#1e1e1e;font-weight:normal;text-align:right;">578</div>
<div class="t" style="right:662.40px;top:327.64px;font-size:13px;line-height:13px;color:#1e1e1e;font-weight:normal;text-align:right;">507</div>
<div class="t" style="right:554.40px;top:327.64px;font-size:13px;line-height:13px;color:#1e1e1e;font-weight:normal;text-align:right;">503</div>
<div class="t" style="right:431.20px;top:327.64px;font-size:13px;line-height:13px;color:#1e1e1e;font-weight:bold;text-align:right;">3&nbsp;948</div>
<div class="t" style="left:161.40px;top:359.80px;font-size:13px;line-height:13px;color:#1e1e1e;font-weight:normal;-webkit-text-stroke:0.2px currentColor;">Парнер 4</div>
<div class="t" style="right:1200.50px;top:360.00px;font-size:13px;line-height:13px;color:#1e1e1e;font-weight:normal;text-align:right;">498</div>
<div class="t" style="right:1092.80px;top:360.00px;font-size:13px;line-height:13px;color:#1e1e1e;font-weight:normal;text-align:right;">512</div>
<div class="t" style="right:985.00px;top:360.00px;font-size:13px;line-height:13px;color:#1e1e1e;font-weight:normal;text-align:right;">40</div>
<div class="t" style="right:877.50px;top:360.00px;font-size:13px;line-height:13px;color:#1e1e1e;font-weight:normal;text-align:right;">40</div>
<div class="t" style="right:769.60px;top:360.00px;font-size:13px;line-height:13px;color:#1e1e1e;font-weight:normal;text-align:right;">555</div>
<div class="t" style="right:662.40px;top:360.00px;font-size:13px;line-height:13px;color:#1e1e1e;font-weight:normal;text-align:right;">644</div>
<div class="t" style="right:554.40px;top:360.00px;font-size:13px;line-height:13px;color:#1e1e1e;font-weight:normal;text-align:right;">596</div>
<div class="t" style="right:431.20px;top:360.00px;font-size:13px;line-height:13px;color:#1e1e1e;font-weight:bold;text-align:right;">2&nbsp;885</div>
<div class="t" style="left:161.40px;top:392.16px;font-size:13px;line-height:13px;color:#1e1e1e;font-weight:normal;-webkit-text-stroke:0.2px currentColor;">Парнер 5</div>
<div class="t" style="right:1200.50px;top:392.36px;font-size:13px;line-height:13px;color:#1e1e1e;font-weight:normal;text-align:right;">477</div>
<div class="t" style="right:1092.80px;top:392.36px;font-size:13px;line-height:13px;color:#1e1e1e;font-weight:normal;text-align:right;">404</div>
<div class="t" style="right:985.00px;top:392.36px;font-size:13px;line-height:13px;color:#1e1e1e;font-weight:normal;text-align:right;">406</div>
<div class="t" style="right:877.50px;top:392.36px;font-size:13px;line-height:13px;color:#1e1e1e;font-weight:normal;text-align:right;">411</div>
<div class="t" style="right:769.60px;top:392.36px;font-size:13px;line-height:13px;color:#1e1e1e;font-weight:normal;text-align:right;">375</div>
<div class="t" style="right:662.40px;top:392.36px;font-size:13px;line-height:13px;color:#1e1e1e;font-weight:normal;text-align:right;">349</div>
<div class="t" style="right:554.40px;top:392.36px;font-size:13px;line-height:13px;color:#1e1e1e;font-weight:normal;text-align:right;">347</div>
<div class="t" style="right:431.20px;top:392.36px;font-size:13px;line-height:13px;color:#1e1e1e;font-weight:bold;text-align:right;">2&nbsp;769</div>
<div class="t" style="left:161.40px;top:424.52px;font-size:13px;line-height:13px;color:#1e1e1e;font-weight:normal;-webkit-text-stroke:0.2px currentColor;">Парнер 6</div>
<div class="t" style="right:1200.50px;top:424.72px;font-size:13px;line-height:13px;color:#1e1e1e;font-weight:normal;text-align:right;">372</div>
<div class="t" style="right:1092.80px;top:424.72px;font-size:13px;line-height:13px;color:#1e1e1e;font-weight:normal;text-align:right;">362</div>
<div class="t" style="right:985.00px;top:424.72px;font-size:13px;line-height:13px;color:#1e1e1e;font-weight:normal;text-align:right;">315</div>
<div class="t" style="right:877.50px;top:424.72px;font-size:13px;line-height:13px;color:#1e1e1e;font-weight:normal;text-align:right;">322</div>
<div class="t" style="right:769.60px;top:424.72px;font-size:13px;line-height:13px;color:#1e1e1e;font-weight:normal;text-align:right;">319</div>
<div class="t" style="right:662.40px;top:424.72px;font-size:13px;line-height:13px;color:#1e1e1e;font-weight:normal;text-align:right;">314</div>
<div class="t" style="right:554.40px;top:424.72px;font-size:13px;line-height:13px;color:#1e1e1e;font-weight:normal;text-align:right;">305</div>
<div class="t" style="right:431.20px;top:424.72px;font-size:13px;line-height:13px;color:#1e1e1e;font-weight:bold;text-align:right;">2&nbsp;309</div>
<div class="t" style="left:161.40px;top:456.88px;font-size:13px;line-height:13px;color:#1e1e1e;font-weight:normal;-webkit-text-stroke:0.2px currentColor;">Парнер 7</div>
<div class="t" style="right:1200.50px;top:457.08px;font-size:13px;line-height:13px;color:#1e1e1e;font-weight:normal;text-align:right;">380</div>
<div class="t" style="right:1092.80px;top:457.08px;font-size:13px;line-height:13px;color:#1e1e1e;font-weight:normal;text-align:right;">340</div>
<div class="t" style="right:985.00px;top:457.08px;font-size:13px;line-height:13px;color:#1e1e1e;font-weight:normal;text-align:right;">304</div>
<div class="t" style="right:877.50px;top:457.08px;font-size:13px;line-height:13px;color:#1e1e1e;font-weight:normal;text-align:right;">319</div>
<div class="t" style="right:769.60px;top:457.08px;font-size:13px;line-height:13px;color:#1e1e1e;font-weight:normal;text-align:right;">289</div>
<div class="t" style="right:662.40px;top:457.08px;font-size:13px;line-height:13px;color:#1e1e1e;font-weight:normal;text-align:right;">274</div>
<div class="t" style="right:554.40px;top:457.08px;font-size:13px;line-height:13px;color:#1e1e1e;font-weight:normal;text-align:right;">270</div>
<div class="t" style="right:431.20px;top:457.08px;font-size:13px;line-height:13px;color:#1e1e1e;font-weight:bold;text-align:right;">2&nbsp;176</div>
<div class="t" style="left:161.40px;top:489.24px;font-size:13px;line-height:13px;color:#1e1e1e;font-weight:normal;-webkit-text-stroke:0.2px currentColor;">Парнер 8</div>
<div class="t" style="right:1200.50px;top:489.44px;font-size:13px;line-height:13px;color:#1e1e1e;font-weight:normal;text-align:right;">183</div>
<div class="t" style="right:1092.80px;top:489.44px;font-size:13px;line-height:13px;color:#1e1e1e;font-weight:normal;text-align:right;">110</div>
<div class="t" style="right:985.00px;top:489.44px;font-size:13px;line-height:13px;color:#1e1e1e;font-weight:normal;text-align:right;">108</div>
<div class="t" style="right:877.50px;top:489.44px;font-size:13px;line-height:13px;color:#1e1e1e;font-weight:normal;text-align:right;">116</div>
<div class="t" style="right:769.60px;top:489.44px;font-size:13px;line-height:13px;color:#1e1e1e;font-weight:normal;text-align:right;">114</div>
<div class="t" style="right:662.40px;top:489.44px;font-size:13px;line-height:13px;color:#1e1e1e;font-weight:normal;text-align:right;">102</div>
<div class="t" style="right:554.40px;top:489.44px;font-size:13px;line-height:13px;color:#1e1e1e;font-weight:normal;text-align:right;">114</div>
<div class="t" style="right:431.20px;top:489.44px;font-size:13px;line-height:13px;color:#1e1e1e;font-weight:bold;text-align:right;">847</div>
<div class="t" style="left:161.40px;top:521.60px;font-size:13px;line-height:13px;color:#1e1e1e;font-weight:normal;-webkit-text-stroke:0.2px currentColor;">Парнер 9</div>
<div class="t" style="right:1200.50px;top:521.80px;font-size:13px;line-height:13px;color:#1e1e1e;font-weight:normal;text-align:right;">273</div>
<div class="t" style="right:1092.80px;top:521.80px;font-size:13px;line-height:13px;color:#1e1e1e;font-weight:normal;text-align:right;">0</div>
<div class="t" style="right:985.00px;top:521.80px;font-size:13px;line-height:13px;color:#1e1e1e;font-weight:normal;text-align:right;">0</div>
<div class="t" style="right:877.50px;top:521.80px;font-size:13px;line-height:13px;color:#1e1e1e;font-weight:normal;text-align:right;">0</div>
<div class="t" style="right:769.60px;top:521.80px;font-size:13px;line-height:13px;color:#1e1e1e;font-weight:normal;text-align:right;">324</div>
<div class="t" style="right:662.40px;top:521.80px;font-size:13px;line-height:13px;color:#1e1e1e;font-weight:normal;text-align:right;">0</div>
<div class="t" style="right:554.40px;top:521.80px;font-size:13px;line-height:13px;color:#1e1e1e;font-weight:normal;text-align:right;">75</div>
<div class="t" style="right:431.20px;top:521.80px;font-size:13px;line-height:13px;color:#1e1e1e;font-weight:bold;text-align:right;">672</div>
<div class="t" style="left:161.40px;top:553.96px;font-size:13px;line-height:13px;color:#1e1e1e;font-weight:normal;-webkit-text-stroke:0.2px currentColor;">Grand Total</div>
<div class="t" style="right:1200.50px;top:554.16px;font-size:13px;line-height:13px;color:#1e1e1e;font-weight:bold;text-align:right;">4&nbsp;884</div>
<div class="t" style="right:1092.80px;top:554.16px;font-size:13px;line-height:13px;color:#1e1e1e;font-weight:bold;text-align:right;">4&nbsp;360</div>
<div class="t" style="right:985.00px;top:554.16px;font-size:13px;line-height:13px;color:#1e1e1e;font-weight:bold;text-align:right;">3&nbsp;812</div>
<div class="t" style="right:877.50px;top:554.16px;font-size:13px;line-height:13px;color:#1e1e1e;font-weight:bold;text-align:right;">3&nbsp;859</div>
<div class="t" style="right:769.60px;top:554.16px;font-size:13px;line-height:13px;color:#1e1e1e;font-weight:bold;text-align:right;">4&nbsp;529</div>
<div class="t" style="right:662.40px;top:554.16px;font-size:13px;line-height:13px;color:#1e1e1e;font-weight:bold;text-align:right;">4&nbsp;215</div>
<div class="t" style="right:554.40px;top:554.16px;font-size:13px;line-height:13px;color:#1e1e1e;font-weight:bold;text-align:right;">4&nbsp;224</div>
<div class="t" style="right:431.20px;top:554.16px;font-size:13px;line-height:13px;color:#1e1e1e;font-weight:bold;text-align:right;">29&nbsp;883</div>
<div class="r" style="left:1120.00px;top:104.00px;width:11.00px;height:719.00px;background:#f4f4f4;"></div>
<div class="r" style="left:1122.50px;top:447.50px;width:2.00px;height:2.00px;background:#dedede;"></div>
<div class="r" style="left:1126.00px;top:447.50px;width:2.00px;height:2.00px;background:#dedede;"></div>
<div class="r" style="left:1122.50px;top:451.80px;width:2.00px;height:2.00px;background:#dedede;"></div>
<div class="r" style="left:1126.00px;top:451.80px;width:2.00px;height:2.00px;background:#dedede;"></div>
<div class="r" style="left:1122.50px;top:456.10px;width:2.00px;height:2.00px;background:#dedede;"></div>
<div class="r" style="left:1126.00px;top:456.10px;width:2.00px;height:2.00px;background:#dedede;"></div>
<div class="r" style="left:1122.50px;top:460.40px;width:2.00px;height:2.00px;background:#dedede;"></div>
<div class="r" style="left:1126.00px;top:460.40px;width:2.00px;height:2.00px;background:#dedede;"></div>
<div class="r" style="left:1122.50px;top:464.70px;width:2.00px;height:2.00px;background:#dedede;"></div>
<div class="r" style="left:1126.00px;top:464.70px;width:2.00px;height:2.00px;background:#dedede;"></div>
<div class="r" style="left:1122.50px;top:469.00px;width:2.00px;height:2.00px;background:#dedede;"></div>
<div class="r" style="left:1126.00px;top:469.00px;width:2.00px;height:2.00px;background:#dedede;"></div>
<div class="r" style="left:1122.50px;top:473.30px;width:2.00px;height:2.00px;background:#dedede;"></div>
<div class="r" style="left:1126.00px;top:473.30px;width:2.00px;height:2.00px;background:#dedede;"></div>
<div class="r" style="left:1122.50px;top:477.60px;width:2.00px;height:2.00px;background:#dedede;"></div>
<div class="r" style="left:1126.00px;top:477.60px;width:2.00px;height:2.00px;background:#dedede;"></div>
<div class="t" style="left:1163.80px;top:125.85px;font-size:14px;line-height:14px;color:#0ca9f2;font-weight:normal;transform:scaleX(0.9052);transform-origin:0 0;-webkit-text-stroke:0.3px currentColor;">SHORT</div>
<div class="t" style="left:1243.40px;top:125.85px;font-size:14px;line-height:14px;color:#666666;font-weight:normal;transform:scaleX(0.9030);transform-origin:0 0;-webkit-text-stroke:0.3px currentColor;">EXTENDED</div>
<div class="r" style="left:1141.80px;top:150.00px;width:88.10px;height:2.00px;background:#0ca9f2;"></div>
<div class="r" style="left:1325.60px;top:113.00px;width:106.70px;height:38.60px;background:#f4f4f4;"></div>
<div class="r" style="left:1143.90px;top:162.60px;width:1.30px;height:3.70px;background:#333;"></div>
<div class="r" style="left:1152.70px;top:162.60px;width:1.30px;height:3.70px;background:#333;"></div>
<div class="r" style="left:1161.50px;top:164.90px;width:9.10px;height:1.30px;background:#333;"></div>
<div class="r" style="left:1169.30px;top:162.60px;width:1.40px;height:5.00px;background:#333;"></div>
<div class="r" style="left:1142.80px;top:174.00px;width:279.00px;height:1.00px;background:#bdbdbd;"></div>
<div class="t" style="left:1143.50px;top:188.95px;font-size:14px;line-height:14px;color:#222;font-weight:normal;transform:scaleX(0.9824);transform-origin:0 0;">Price set</div>
<div class="t" style="left:1201.20px;top:189.08px;font-size:15.5px;line-height:15.5px;color:#e53935;font-weight:normal;-webkit-text-stroke:0.3px currentColor;">*</div>
<div class="r" style="left:1143.00px;top:208.00px;width:109.80px;height:26.70px;background:#e0e0e0;border-radius:13.4px"></div>
<div class="t" style="left:1154.90px;top:215.27px;font-size:11.5px;line-height:11.5px;color:#222;font-weight:normal;transform:scaleX(0.9759);transform-origin:0 0;-webkit-text-stroke:0.15px currentColor;">Online-shops</div>
<svg class="r" style="left:1227.20px;top:213.00px;" width="17.00" height="17.00" viewBox="0 0 17 17"><circle cx="8.5" cy="8.5" r="8.5" fill="#8b9096"/><path d="M5 5L12 12M12 5L5 12" stroke="#fff" stroke-width="1.5"/></svg>
<svg class="r" style="left:1404.70px;top:221.40px;" width="8.00" height="4.20" viewBox="0 0 8.0 4.2"><path fill="#666" d="M0 4.2H8.0L4.0 0z"/></svg>
<div class="r" style="left:1142.80px;top:238.00px;width:279.00px;height:1.00px;background:#bdbdbd;"></div>
<div class="t" style="left:1143.40px;top:253.55px;font-size:14px;line-height:14px;color:#222;font-weight:normal;transform:scaleX(0.9713);transform-origin:0 0;">Period</div>
<div class="t" style="left:1186.90px;top:253.78px;font-size:15.5px;line-height:15.5px;color:#e53935;font-weight:normal;-webkit-text-stroke:0.3px currentColor;">*</div>
<div class="t" style="left:1143.40px;top:280.25px;font-size:14px;line-height:14px;color:#222;font-weight:normal;transform:scaleX(0.9835);transform-origin:0 0;">Last week</div>
<svg class="r" style="left:1404.70px;top:284.70px;" width="8.00" height="4.20" viewBox="0 0 8.0 4.2"><path fill="#666" d="M0 4.2H8.0L4.0 0z"/></svg>
<div class="r" style="left:1142.80px;top:300.00px;width:279.00px;height:1.00px;background:#bdbdbd;"></div>
<div class="t" style="left:1143.40px;top:315.05px;font-size:14px;line-height:14px;color:#222;font-weight:normal;transform:scaleX(0.9980);transform-origin:0 0;">Time</div>
<div class="t" style="left:1178.50px;top:315.28px;font-size:15.5px;line-height:15.5px;color:#e53935;font-weight:normal;-webkit-text-stroke:0.3px currentColor;">*</div>
<div class="t" style="left:1144.00px;top:342.15px;font-size:14px;line-height:14px;color:#222;font-weight:normal;transform:scaleX(0.9766);transform-origin:0 0;">10:00 AM</div>
<svg class="r" style="left:1400.30px;top:340.50px;" width="17.00" height="17.00" viewBox="0 0 17 17"><circle cx="8.5" cy="8.5" r="7.6" fill="none" stroke="#666" stroke-width="1.6"/><path d="M8.3 4.3V8.8L11.3 10.6" fill="none" stroke="#666" stroke-width="1.5"/></svg>
<div class="r" style="left:1142.80px;top:362.00px;width:279.00px;height:1.00px;background:#bdbdbd;"></div>
<div class="t" style="left:1143.40px;top:387.29px;font-size:16.2px;line-height:16.2px;color:#222;font-weight:normal;transform:scaleX(1.0667);transform-origin:0 0;-webkit-text-stroke:0.3px currentColor;">Contractor</div>
<div class="r" style="left:1142.80px;top:411.00px;width:279.00px;height:1.00px;background:#ebebeb;"></div>
<div class="t" style="left:1143.40px;top:426.75px;font-size:14px;line-height:14px;color:#222;font-weight:normal;transform:scaleX(0.9957);transform-origin:0 0;">Contractor</div>
<div class="t" style="left:1144.70px;top:454.47px;font-size:13.5px;line-height:13.5px;color:#222;font-weight:normal;transform:scaleX(0.9563);transform-origin:0 0;">Парнер 1, Партнер 2, Партнер 3.....</div>
<svg class="r" style="left:1376.60px;top:451.10px;" width="17.00" height="17.00" viewBox="0 0 17 17"><circle cx="8.5" cy="8.5" r="8.5" fill="#cfcfcf"/><path d="M5.2 5.2L11.8 11.8M11.8 5.2L5.2 11.8" stroke="#8d8d8d" stroke-width="1.4"/></svg>
<svg class="r" style="left:1404.80px;top:457.90px;" width="8.00" height="4.20" viewBox="0 0 8.0 4.2"><path fill="#666" d="M0 4.2H8.0L4.0 0z"/></svg>
<div class="r" style="left:1142.80px;top:473.00px;width:279.00px;height:1.00px;background:#bdbdbd;"></div>
<div class="t" style="left:1143.50px;top:498.29px;font-size:16.2px;line-height:16.2px;color:#222;font-weight:normal;transform:scaleX(1.0628);transform-origin:0 0;-webkit-text-stroke:0.3px currentColor;">Product</div>
<div class="r" style="left:1142.80px;top:522.00px;width:279.00px;height:1.00px;background:#ebebeb;"></div>
<div class="t" style="left:1143.50px;top:537.15px;font-size:14px;line-height:14px;color:#222;font-weight:normal;transform:scaleX(0.9684);transform-origin:0 0;">Name</div>
<div class="t" style="left:1143.20px;top:563.75px;font-size:14px;line-height:14px;color:#a8a8a8;font-weight:normal;transform:scaleX(0.9825);transform-origin:0 0;">Enter search text...</div>
<div class="r" style="left:1142.80px;top:584.00px;width:279.00px;height:1.00px;background:#bdbdbd;"></div>
<div class="t" style="left:1143.50px;top:599.95px;font-size:14px;line-height:14px;color:#222;font-weight:normal;transform:scaleX(0.9606);transform-origin:0 0;">Category</div>
<div class="t" style="left:1143.20px;top:626.85px;font-size:14px;line-height:14px;color:#222;font-weight:normal;transform:scaleX(0.9886);transform-origin:0 0;">Комп&#39;ютерна периферія, Веб-кам...</div>
<svg class="r" style="left:1376.70px;top:623.90px;" width="17.00" height="17.00" viewBox="0 0 17 17"><circle cx="8.5" cy="8.5" r="8.5" fill="#cfcfcf"/><path d="M5.2 5.2L11.8 11.8M11.8 5.2L5.2 11.8" stroke="#8d8d8d" stroke-width="1.4"/></svg>
<svg class="r" style="left:1404.70px;top:630.50px;" width="8.00" height="4.20" viewBox="0 0 8.0 4.2"><path fill="#666" d="M0 4.2H8.0L4.0 0z"/></svg>
<div class="r" style="left:1142.80px;top:647.00px;width:279.00px;height:1.00px;background:#bdbdbd;"></div>
<div class="t" style="left:1143.30px;top:661.95px;font-size:14px;line-height:14px;color:#222;font-weight:normal;transform:scaleX(0.9847);transform-origin:0 0;">Vendor</div>
<div class="t" style="left:1143.30px;top:688.65px;font-size:14px;line-height:14px;color:#a8a8a8;font-weight:normal;transform:scaleX(0.9596);transform-origin:0 0;">Select...</div>
<svg class="r" style="left:1404.70px;top:693.60px;" width="8.00" height="4.20" viewBox="0 0 8.0 4.2"><path fill="#666" d="M0 4.2H8.0L4.0 0z"/></svg>
<div class="r" style="left:1142.80px;top:710.00px;width:279.00px;height:1.00px;background:#bdbdbd;"></div>
<div class="t" style="left:1143.30px;top:725.45px;font-size:14px;line-height:14px;color:#222;font-weight:normal;transform:scaleX(1.0055);transform-origin:0 0;">Availability</div>
<div class="t" style="left:1143.30px;top:751.85px;font-size:14px;line-height:14px;color:#a8a8a8;font-weight:normal;transform:scaleX(0.9596);transform-origin:0 0;">Select...</div>
<svg class="r" style="left:1404.70px;top:756.70px;" width="8.00" height="4.20" viewBox="0 0 8.0 4.2"><path fill="#666" d="M0 4.2H8.0L4.0 0z"/></svg>
<div class="r" style="left:1142.80px;top:772.00px;width:279.00px;height:1.00px;background:#bdbdbd;"></div>
<div class="r" style="left:1142.00px;top:783.60px;width:145.60px;height:29.10px;background:#0ca9f2;"></div>
<div class="r" style="left:1287.60px;top:783.60px;width:144.20px;height:29.10px;background:#ffffff;box-sizing:border-box;border:1px solid #7ccbf2;border-left:none"></div>
<div class="t" style="left:1196.10px;top:791.35px;font-size:14px;line-height:14px;color:#ffffff;font-weight:normal;transform:scaleX(1.0571);transform-origin:0 0;-webkit-text-stroke:0.15px currentColor;">Apply</div>
<div class="t" style="left:1340.40px;top:791.35px;font-size:14px;line-height:14px;color:#0ca9f2;font-weight:normal;transform:scaleX(0.9962);transform-origin:0 0;-webkit-text-stroke:0.15px currentColor;">Reset</div>
<svg class="r" style="left:1215.00px;top:280.00px;" width="130.00" height="70.00" viewBox="0 0 1534 826"><path fill="#ea1c24" stroke="#ea1c24" stroke-width="6" stroke-linejoin="round" d="M1400,245 L1340,200 L1250,150 L1100,120 L950,118 L820,130 L700,165 L580,215 L450,310 L290,450 L315,300 L290,240 L240,210 L205,235 L160,420 L130,620 L120,700 L150,745 L195,750 L350,690 L560,645 L600,615 L635,535 L420,548 L520,450 L600,380 L720,315 L850,275 L1000,250 L1150,240 L1280,255z"/></svg>
</body></html>
